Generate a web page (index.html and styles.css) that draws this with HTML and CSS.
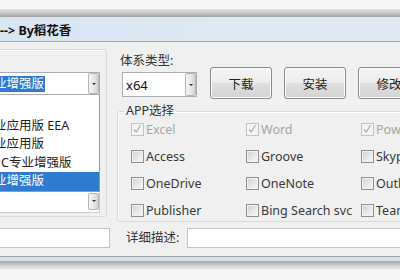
FILE: index.html
```html
<!DOCTYPE html>
<html lang="zh-CN">
<head>
<meta charset="utf-8">
<title>Office 部署工具</title>
<link rel="stylesheet" href="styles.css">
</head>
<body>
<div class="screen">
  <div class="desk-top"></div>
  <div class="window">
    <div class="frame-top"></div>
    <div class="titlebar"><span class="title">--&gt; By稻花香</span></div>
    <div class="client">
      <div class="top-row">
        <div class="left-group">
          <div class="combo combo-edition">
            <div class="combo-text"><span class="sel-text">业增强版</span></div>
            <div class="combo-btn"><span class="arrow"></span></div>
          </div>
          <div class="droplist">
            <div class="item">&nbsp;</div>
            <div class="item">业应用版 EEA</div>
            <div class="item">业应用版</div>
            <div class="item item-c">C专业增强版</div>
            <div class="item item-sel">业增强版</div>
          </div>
          <div class="combo combo-under">
            <div class="combo-text"></div>
            <div class="combo-btn"><span class="arrow"></span></div>
          </div>
        </div>
        <div class="right-panel">
          <div class="top-controls">
            <div class="type-col">
              <div class="label">体系类型:</div>
              <div class="combo combo-arch">
                <div class="combo-text">x64</div>
                <div class="combo-btn"><span class="arrow"></span></div>
              </div>
            </div>
            <div class="buttons">
              <div class="btn">下载</div>
              <div class="btn">安装</div>
              <div class="btn">修改</div>
            </div>
          </div>
          <fieldset class="apps">
            <legend>APP选择</legend>
            <div class="app-grid">
              <div class="chk disabled"><span class="box"><svg viewBox="0 0 13 13" width="11" height="11"><path d="M2.5 6.5 L5 9.5 L10 1.5" fill="none" stroke="#a9a9a9" stroke-width="1.4"/></svg></span><span>Excel</span></div>
              <div class="chk disabled"><span class="box"><svg viewBox="0 0 13 13" width="11" height="11"><path d="M2.5 6.5 L5 9.5 L10 1.5" fill="none" stroke="#a9a9a9" stroke-width="1.4"/></svg></span><span>Word</span></div>
              <div class="chk disabled"><span class="box"><svg viewBox="0 0 13 13" width="11" height="11"><path d="M2.5 6.5 L5 9.5 L10 1.5" fill="none" stroke="#a9a9a9" stroke-width="1.4"/></svg></span><span>PowerPoint</span></div>
              <div class="chk"><span class="box"></span><span>Access</span></div>
              <div class="chk"><span class="box"></span><span>Groove</span></div>
              <div class="chk"><span class="box"></span><span>Skype for Business</span></div>
              <div class="chk"><span class="box"></span><span>OneDrive</span></div>
              <div class="chk"><span class="box"></span><span>OneNote</span></div>
              <div class="chk"><span class="box"></span><span>Outlook</span></div>
              <div class="chk"><span class="box"></span><span>Publisher</span></div>
              <div class="chk"><span class="box"></span><span>Bing Search svc</span></div>
              <div class="chk"><span class="box"></span><span>Teams</span></div>
            </div>
          </fieldset>
        </div>
      </div>
      <div class="bottom-row">
        <div class="textbox tb-left"></div>
        <div class="label desc-label">详细描述:</div>
        <div class="textbox tb-desc"></div>
      </div>
    </div>
    <div class="frame-bottom"></div>
  </div>
  <div class="desk-shadow"></div>
</div>
</body>
</html>
```

FILE: styles.css
```css
html, body {
  margin: 0;
  padding: 0;
}

body {
  background: #f6f6f6;
  font-family: "Noto Sans", "Noto Sans CJK SC", sans-serif;
  font-size: 12.5px;
  color: #333;
}

.screen {
  width: 400px;
  height: 280px;
  overflow: hidden;
  background: #f6f6f6;
}

.desk-top {
  height: 9px;
  background: #f7f7f7;
}

.window {
  width: 660px;
}

.frame-top {
  height: 8px;
  background: linear-gradient(#e2e2e2, #cfcfcf 40%, #a3a3a3);
}

.titlebar {
  height: 25px;
  box-sizing: border-box;
  padding-top: 4px;
  background: linear-gradient(90deg, #d9e5f1, #dee9f4 35%, #e0e8f3 70%, #e2e7f3);
  border-bottom: 1px solid #a9a9a9;
}

.title {
  display: block;
  line-height: 20px;
  font-weight: bold;
  font-size: 12.5px;
  color: #111;
}

.client {
  height: 214px;
  box-sizing: border-box;
  margin-left: -20px;
  padding-top: 7px;
  background: #f0f0f0;
  display: flex;
  flex-direction: column;
  gap: 6px;
}

.top-row {
  display: flex;
  align-items: flex-start;
  gap: 10px;
  height: 173px;
}

.left-group {
  width: 127px;
  height: 168px;
  box-sizing: border-box;
  border: 1px solid #d5dadf;
  border-radius: 3px;
  padding: 22px 6px 0 6px;
  box-shadow: inset 1px 1px 0 #fff;
}

.combo {
  display: flex;
  box-sizing: border-box;
  border: 1px solid #abadb3;
  background: #fff;
}

.combo-text {
  flex: 1;
  display: flex;
  align-items: center;
  padding-left: 6px;
  white-space: nowrap;
  color: #111;
}

.combo-btn {
  width: 11px;
  box-sizing: border-box;
  border: 1px solid #b5b5b5;
  border-radius: 2px;
  background: linear-gradient(90deg, #f4f4f4, #e4e4e4 60%, #d2d2d2);
  display: flex;
  align-items: center;
  justify-content: center;
}

.arrow {
  width: 0;
  height: 0;
  border-left: 2px solid transparent;
  border-right: 2px solid transparent;
  border-top: 2px solid #333;
}

.combo-edition {
  height: 23px;
}

.sel-text {
  background: #2f7bd2;
  color: #fff;
  line-height: 16px;
  padding-right: 1px;
}

.droplist {
  box-sizing: border-box;
  border: 1px solid #9a9a9a;
  border-top: none;
  background: #fff;
  padding-top: 3px;
}

.item {
  height: 18.5px;
  line-height: 18.5px;
  padding-left: 6px;
  white-space: nowrap;
  color: #222;
}

.item-c {
  padding-left: 13px;
}

.item-sel {
  background: #2f7bd2;
  color: #fff;
}

.combo-under {
  height: 21px;
  border-color: #c8c8c8;
  border-top: none;
}

.combo-under .combo-btn {
  margin: 1px 0 2px;
}

.right-panel {
  flex: 1;
  display: flex;
  flex-direction: column;
}

.top-controls {
  display: flex;
  align-items: flex-start;
  padding-left: 3px;
}

.type-col {
  margin-top: 4px;
  width: 77px;
}

.label {
  line-height: 16px;
  white-space: nowrap;
  color: #333;
}

.combo-arch {
  margin-top: 3px;
  margin-left: 2px;
  height: 25px;
}

.combo-arch .combo-text {
  padding-left: 3px;
  font-size: 13px;
}

.buttons {
  display: flex;
  gap: 12px;
  margin-top: 18px;
  margin-left: 13px;
}

.btn {
  width: 62px;
  height: 32px;
  box-sizing: border-box;
  border: 1px solid #8a8a8a;
  border-radius: 3px;
  background: linear-gradient(#f4f4f4, #ececec 48%, #dfdfdf 52%, #d3d3d3);
  box-shadow: inset 0 0 0 1px #fbfbfb;
  display: flex;
  align-items: center;
  justify-content: center;
  color: #222;
}

.apps {
  margin: 5px 0 0 0;
  padding: 0;
  border: 1px solid #d5dadf;
  border-radius: 3px;
  min-width: 0;
  box-shadow: inset 1px 1px 0 #fff;
}

.apps legend {
  padding: 0 2px;
  margin-left: 6px;
  line-height: 14px;
  color: #333;
}

.app-grid {
  display: grid;
  grid-template-columns: repeat(3, 115px);
  grid-auto-rows: 22px;
  row-gap: 5px;
  margin-left: 13px;
}

.chk {
  display: flex;
  align-items: center;
  gap: 2px;
  white-space: nowrap;
  color: #383838;
}

.box {
  width: 13px;
  height: 13px;
  box-sizing: border-box;
  border: 1px solid #8f8f8f;
  background: linear-gradient(135deg, #cdd0d3, #eeeeee 70%, #f6f6f6);
  box-shadow: inset 0 0 0 1px #f2f2f2;
  display: flex;
  align-items: center;
  justify-content: center;
  flex: none;
}

.chk.disabled {
  color: #a6a6a6;
}

.chk.disabled .box {
  border-color: #c2c2c2;
  background: #f4f4f4;
  box-shadow: none;
}

.bottom-row {
  display: flex;
  align-items: center;
  height: 20px;
}

.textbox {
  height: 20px;
  box-sizing: border-box;
  border: 1px solid #c4c4c4;
  background: #fff;
}

.tb-left {
  width: 130px;
}

.desc-label {
  margin-left: 16px;
  width: 56px;
}

.tb-desc {
  margin-left: 5px;
  flex: 1;
}

.frame-bottom {
  height: 5px;
  box-sizing: border-box;
  border-top: 1px solid #a2a2a2;
  background: #cfe2ee;
}

.desk-shadow {
  height: 9px;
  background: linear-gradient(#a6a6a6, #cfcfcf 50%, #f2f2f2);
}
```
